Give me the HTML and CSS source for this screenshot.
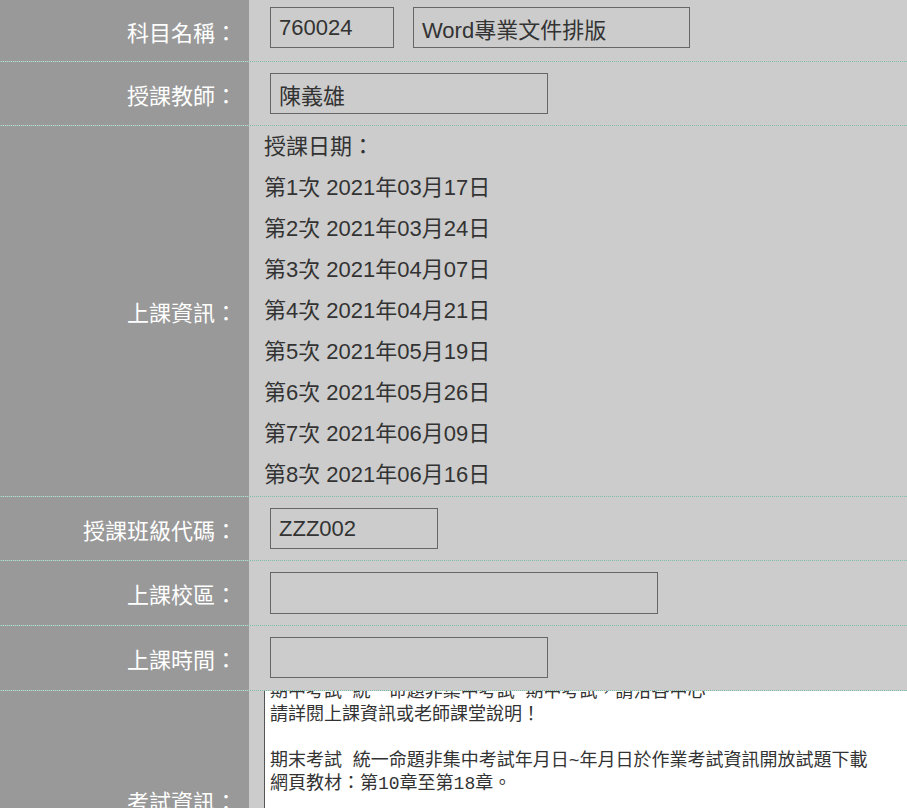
FILE: index.html
```html
<!DOCTYPE html>
<html lang="zh-Hant">
<head>
<meta charset="utf-8">
<title>課程資訊</title>
<link rel="stylesheet" href="styles.css">
</head>
<body>
<div class="form">
  <div class="row row-first">
    <div class="label">科目名稱：</div>
    <div class="field field-inputs">
      <input class="in w-code" type="text" value="760024" readonly>
      <input class="in w-name" type="text" value="Word專業文件排版" readonly>
    </div>
  </div>
  <div class="row">
    <div class="label">授課教師：</div>
    <div class="field field-inputs">
      <input class="in w-mid" type="text" value="陳義雄" readonly>
    </div>
  </div>
  <div class="row">
    <div class="label">上課資訊：</div>
    <div class="field field-text">
      <div>授課日期：</div>
      <div>第1次 2021年03月17日</div>
      <div>第2次 2021年03月24日</div>
      <div>第3次 2021年04月07日</div>
      <div>第4次 2021年04月21日</div>
      <div>第5次 2021年05月19日</div>
      <div>第6次 2021年05月26日</div>
      <div>第7次 2021年06月09日</div>
      <div>第8次 2021年06月16日</div>
    </div>
  </div>
  <div class="row">
    <div class="label">授課班級代碼：</div>
    <div class="field field-inputs">
      <input class="in w-short" type="text" value="ZZZ002" readonly>
    </div>
  </div>
  <div class="row">
    <div class="label">上課校區：</div>
    <div class="field field-inputs">
      <input class="in w-long tall" type="text" value="" readonly>
    </div>
  </div>
  <div class="row">
    <div class="label">上課時間：</div>
    <div class="field field-inputs pad-b12">
      <input class="in w-mid" type="text" value="" readonly>
    </div>
  </div>
  <div class="row row-last">
    <div class="label">考試資訊：</div>
    <div class="field field-area">
      <div class="area">
        <div class="area-text">期中考試 統一命題非集中考試 期中考試，請洽各中心
請詳閱上課資訊或老師課堂說明！

期末考試 統一命題非集中考試年月日~年月日於作業考試資訊開放試題下載
網頁教材：第10章至第18章。
</div>
      </div>
    </div>
  </div>
</div>
</body>
</html>
```

FILE: styles.css
```css
html, body {
  margin: 0;
  padding: 0;
  overflow: hidden;
}

body {
  background: #cccccc;
  font-family: "Liberation Sans", "Noto Sans CJK TC", sans-serif;
  font-size: 22px;
  color: #333333;
}

.form {
  display: flex;
  flex-direction: column;
}

.row {
  display: grid;
  grid-template-columns: 249px 1fr;
  border-bottom: 1px dotted #7fbfa6;
}

.row-last {
  border-bottom: none;
}

.label {
  background: #999999;
  color: #ffffff;
  font-family: "Noto Sans CJK TC", "Liberation Sans", sans-serif;
  font-size: 22px;
  display: flex;
  align-items: center;
  justify-content: flex-end;
  padding-right: 12px;
  white-space: nowrap;
}

.field {
  background: #cccccc;
  min-width: 0;
}

.field-inputs {
  display: flex;
  align-items: flex-start;
  gap: 19px;
  padding: 11px 0 11px 21px;
}

.row-first .field-inputs {
  padding: 7px 0 13px 21px;
}

.pad-b12 {
  padding-bottom: 12px;
}

.in {
  box-sizing: border-box;
  height: 41px;
  margin: 0;
  padding: 0 8px;
  border: 1px solid #666666;
  border-radius: 0;
  background: transparent;
  color: #333333;
  font-family: "Liberation Sans", "Noto Sans CJK TC", sans-serif;
  font-size: 22px;
  outline: none;
}

.tall {
  height: 42px;
}

.w-code { width: 124px; }
.w-name { width: 277px; }
.w-mid { width: 278px; }
.w-short { width: 168px; }
.w-long { width: 388px; }

.field-text {
  padding: 0 0 1px 15px;
  line-height: 41px;
  color: #333333;
  white-space: nowrap;
}

.field-area {
  padding: 0 0 0 15px;
}

.area {
  height: 218px;
  width: 720px;
  background: #ffffff;
  border-left: 1px solid #555555;
  overflow: hidden;
}

.area-text {
  margin-top: -10px;
  padding-left: 5px;
  font-family: "Liberation Mono", "Noto Sans CJK TC", monospace;
  font-size: 18px;
  line-height: 23px;
  color: #333333;
  white-space: pre;
}
```
